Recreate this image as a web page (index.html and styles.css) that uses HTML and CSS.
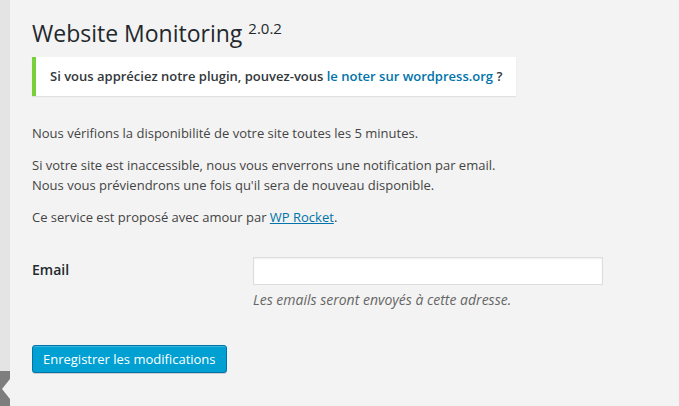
FILE: index.html
```html
<!DOCTYPE html>
<html lang="fr">
  <head>
    <meta charset="UTF-8" />
    <meta name="viewport" content="width=device-width, initial-scale=1.0" />
    <title>Website Monitoring</title>
    <link rel="stylesheet" href="styles.css">
  </head>
  <body>
    <aside class="sidebar">
      <div class="sidebar-menu"></div>
      <div class="sidebar-current"></div>
    </aside>

    <main class="content">
      <div class="wrap">
        <h1 class="page-title">Website Monitoring <sup>2.0.2</sup></h1>

        <div class="notice">
          <p>Si vous appréciez notre plugin, pouvez-vous <a href="#">le noter sur wordpress.org</a> ?</p>
        </div>

        <p>Nous vérifions la disponibilité de votre site toutes les 5 minutes.</p>
        <p>Si votre site est inaccessible, nous vous enverrons une notification par email.<br />
          Nous vous préviendrons une fois qu'il sera de nouveau disponible.</p>
        <p>Ce service est proposé avec amour par <a class="plain-link" href="#">WP Rocket</a>.</p>

        <form id="settingsForm">
          <div class="form-row">
            <label class="form-label" for="email">Email</label>
            <div class="form-field">
              <input id="email" name="email" type="email" class="regular-text" />
              <p class="description">Les emails seront envoyés à cette adresse.</p>
            </div>
          </div>

          <p class="submit">
            <input type="submit" class="button-primary" value="Enregistrer les modifications" />
          </p>
        </form>
      </div>
    </main>
  </body>
</html>
```

FILE: styles.css
```css
* {
  box-sizing: border-box;
  margin: 0;
  padding: 0;
}

body {
  background-color: #f3f3f3;
  color: #444;
  font-family: "Open Sans", sans-serif;
  font-size: 13px;
  line-height: 1.5;
  min-height: 100vh;
  display: flex;
}

.sidebar {
  width: 10px;
  display: flex;
  flex-direction: column;
}

.sidebar-menu {
  flex: 1;
  background-color: #e4e4e4;
}

.sidebar-current {
  height: 35px;
  background-color: #7e7e7e;
  position: relative;
}

.sidebar-current::after {
  content: "";
  position: absolute;
  right: 0;
  top: 8px;
  border-top: 10px solid transparent;
  border-bottom: 10px solid transparent;
  border-right: 8px solid #f3f3f3;
}

.content {
  flex: 1;
  padding-left: 20px;
}

.wrap {
  margin: 10px 20px 0 2px;
}

.page-title {
  font-size: 23px;
  font-weight: 400;
  line-height: 29px;
  color: #23282d;
  padding: 9px 15px 4px 0;
}

.page-title sup {
  font-size: 15px;
  vertical-align: 8px;
  line-height: 0;
}

.notice {
  width: fit-content;
  background: #fff;
  border-left: 4px solid #7ad03a;
  box-shadow: 0 1px 1px rgba(0, 0, 0, 0.08);
  padding: 1px 12px;
  margin: 5px 0 28px;
}

.notice p {
  margin: 6.5px 0;
  padding: 2px;
  font-weight: 600;
  color: #32373c;
}

.notice a {
  color: #0073aa;
  text-decoration: none;
}

p {
  margin: 13px 0;
}

.plain-link {
  color: #0073aa;
}

#settingsForm {
  margin-top: 13px;
}

.form-row {
  display: flex;
  padding-top: 16px;
}

.form-label {
  width: 221px;
  padding: 2px 10px 0 0;
  font-size: 14px;
  font-weight: 600;
  color: #23282d;
}

.regular-text {
  width: 350px;
  height: 28px;
  border: 1px solid #ddd;
  box-shadow: inset 0 1px 2px rgba(0, 0, 0, 0.07);
  background: #fff;
  font-family: inherit;
  font-size: 14px;
  padding: 3px 5px;
}

.regular-text:focus {
  border-color: #5b9dd9;
  outline: none;
}

.description {
  margin: 4px 0 0;
  font-size: 14px;
  font-style: italic;
  color: #666;
}

.submit {
  margin: 35px 0 0;
}

.button-primary {
  height: 28px;
  line-height: 26px;
  padding: 0 10px 1px;
  font-family: inherit;
  font-size: 13px;
  color: #fff;
  background: #00a0d2;
  border: 1px solid #0073aa;
  border-radius: 3px;
  box-shadow: inset 0 1px 0 rgba(120, 200, 230, 0.5), 0 1px 0 rgba(0, 0, 0, 0.15);
  cursor: pointer;
}

.button-primary:hover {
  background: #0091cd;
}
```
